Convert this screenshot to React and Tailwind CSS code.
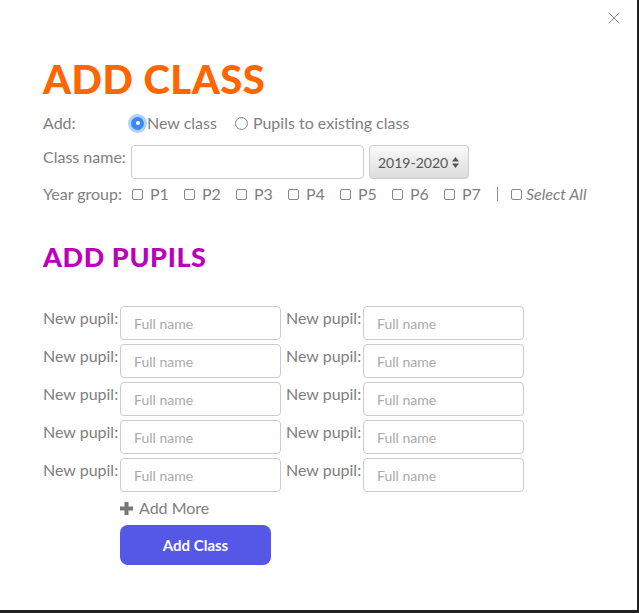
import { X } from "lucide-react";

function Radio({ checked }) {
  if (checked) {
    return (
      <span className="shrink-0 w-[13px] h-[13px] rounded-full bg-[#3b87f5] flex items-center justify-center shadow-[0_0_0_3px_rgba(80,150,250,0.45)]">
        <span className="w-[4px] h-[4px] rounded-full bg-white"></span>
      </span>
    );
  }
  return <span className="shrink-0 block w-[13px] h-[13px] rounded-full border border-[#888] bg-white"></span>;
}

function Check() {
  return <span className="shrink-0 w-[11px] h-[11px] rounded-[2px] border border-[#888] bg-white block"></span>;
}

function PupilRow() {
  return (
    <div className="flex items-start h-[34px] mb-[4px]">
      <span className="w-[77px]">New pupil:</span>
      <div className="w-[161px] h-[34px] border border-[#ccc] rounded-[4px] flex items-center pl-[13px] text-[14px] text-[#aaa]">
        Full name
      </div>
      <span className="w-[82px] pl-[5px]">New pupil:</span>
      <div className="w-[161px] h-[34px] border border-[#ccc] rounded-[4px] flex items-center pl-[13px] text-[14px] text-[#aaa]">
        Full name
      </div>
    </div>
  );
}

export default function App() {
  const years = ["P1", "P2", "P3", "P4", "P5", "P6", "P7"];
  return (
    <div className="w-[639px] h-[613px] bg-[#222]" style={{ fontFamily: "Lato, 'Open Sans', sans-serif" }}>
      <div className="relative w-[637px] h-[610px] bg-white text-[16px] text-[#808080] pl-[43px]">
        <X className="absolute right-[13px] top-[8px] text-[#888]" size={20} strokeWidth={1.1} />

        <h1 className="pt-[59px] text-[40px] leading-[40px] font-black text-[#ff6600] tracking-[0.5px]">ADD CLASS</h1>

        <div className="flex items-center h-[24px] mt-[12px]">
          <span className="w-[88px]">Add:</span>
          <Radio checked />
          <span className="ml-[3px]">New class</span>
          <span className="ml-[18px]"><Radio /></span>
          <span className="ml-[5px]">Pupils to existing class</span>
        </div>

        <div className="flex items-start h-[34px] mt-[10px]">
          <span className="w-[88px]">Class name:</span>
          <div className="w-[233px] h-[34px] border border-[#ccc] rounded-[4px]"></div>
          <div className="ml-[5px] w-[100px] h-[34px] border border-[#ccc] rounded-[4px] bg-gradient-to-b from-[#fafafa] to-[#dcdcdc] flex items-center justify-between pl-[8px] pr-[9px] text-[14px] text-[#555]">
            <span>2019-2020</span>
            <svg width="7" height="11" viewBox="0 0 7 11"><path d="M3.5 0L7 4.5H0z M3.5 11L0 6.5H7z" fill="#555" /></svg>
          </div>
        </div>

        <div className="flex items-center h-[20px] mt-[5px]">
          <span className="w-[89px]">Year group:</span>
          {years.map((y) => (
            <span key={y} className="flex items-center w-[52px]">
              <Check />
              <span className="ml-[7px]">{y}</span>
            </span>
          ))}
          <span className="ml-[1px] mr-[13px] w-[1px] h-[14px] bg-[#888]"></span>
          <Check />
          <span className="ml-[4px] italic">Select All</span>
        </div>

        <h2 className="mt-[39px] text-[27px] leading-[27px] font-black text-[#bb00bb] tracking-[0.6px]">ADD PUPILS</h2>

        <div className="mt-[36px]">
          <PupilRow />
          <PupilRow />
          <PupilRow />
          <PupilRow />
          <PupilRow />
        </div>

        <div className="ml-[77px] mt-[2px] flex items-center">
          <svg width="13" height="13" viewBox="0 0 13 13"><path d="M4.5 0h4v4.5H13v4H8.5V13h-4V8.5H0v-4h4.5z" fill="#777" /></svg>
          <span className="ml-[6px]">Add More</span>
        </div>

        <button className="ml-[77px] mt-[5px] w-[151px] h-[40px] rounded-[8px] bg-[#5558e6] text-white font-bold text-[15px]">
          Add Class
        </button>
      </div>
    </div>
  );
}
